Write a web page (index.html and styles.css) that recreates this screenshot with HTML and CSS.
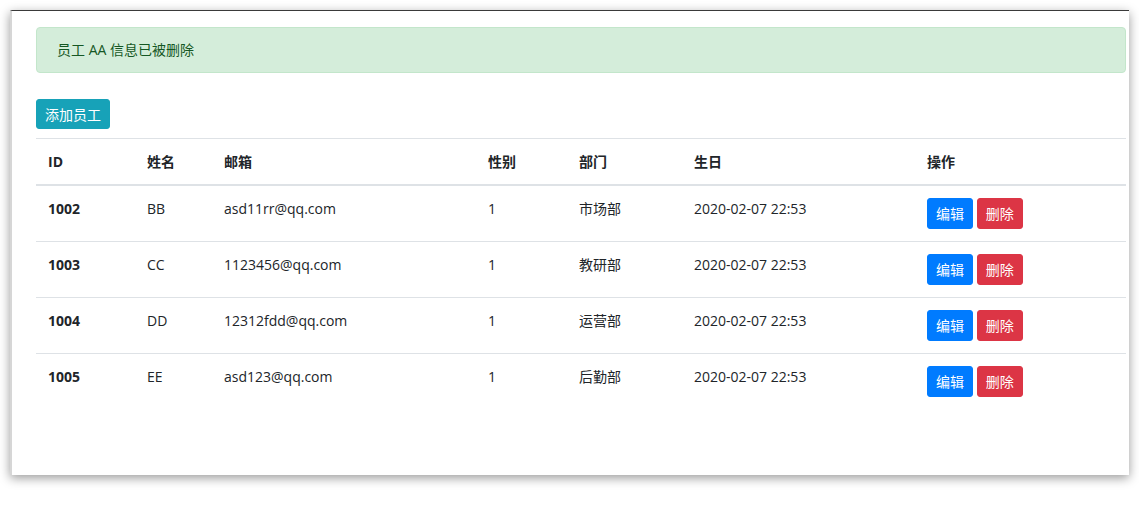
FILE: index.html
```html
<!DOCTYPE html>
<html lang="zh">
<head>
<meta charset="utf-8">
<title>员工列表</title>
<link rel="stylesheet" href="styles.css">
</head>
<body>
<div class="window">
  <div class="alert">员工 AA 信息已被删除</div>
  <button class="btn btn-info">添加员工</button>
  <table class="table">
    <colgroup>
      <col class="c-id"><col class="c-name"><col class="c-mail"><col class="c-sex"><col class="c-dept"><col class="c-birth"><col class="c-op">
    </colgroup>
    <thead>
      <tr><th>ID</th><th>姓名</th><th>邮箱</th><th>性别</th><th>部门</th><th>生日</th><th>操作</th></tr>
    </thead>
    <tbody>
      <tr><th>1002</th><td>BB</td><td>asd11rr@qq.com</td><td>1</td><td>市场部</td><td>2020-02-07 22:53</td><td><button class="btn btn-primary">编辑</button> <button class="btn btn-danger">删除</button></td></tr>
      <tr><th>1003</th><td>CC</td><td>1123456@qq.com</td><td>1</td><td>教研部</td><td>2020-02-07 22:53</td><td><button class="btn btn-primary">编辑</button> <button class="btn btn-danger">删除</button></td></tr>
      <tr><th>1004</th><td>DD</td><td>12312fdd@qq.com</td><td>1</td><td>运营部</td><td>2020-02-07 22:53</td><td><button class="btn btn-primary">编辑</button> <button class="btn btn-danger">删除</button></td></tr>
      <tr><th>1005</th><td>EE</td><td>asd123@qq.com</td><td>1</td><td>后勤部</td><td>2020-02-07 22:53</td><td><button class="btn btn-primary">编辑</button> <button class="btn btn-danger">删除</button></td></tr>
    </tbody>
  </table>
</div>
</body>
</html>
```
FILE: styles.css
```css
html, body {
  margin: 0;
  padding: 0;
  background: #fff;
}
body {
  font-family: "Open Sans", "Noto Sans CJK SC", sans-serif;
  font-size: 14px;
  line-height: 21px;
  color: #212529;
  min-height: 515px;
  padding-top: 10px;
  padding-left: 10px;
  box-sizing: border-box;
}
.window {
  box-sizing: border-box;
  width: 1119px;
  height: 465px;
  border-top: 1px solid #3a3a3a;
  border-left: 2px solid #d6d6d6;
  background: #fff;
  box-shadow: 0 3px 10px rgba(0, 0, 0, 0.4);
  padding: 16px 3px 0 24px;
}
.alert {
  box-sizing: border-box;
  height: 46px;
  padding: 11px 20px 12px;
  background: #d4edda;
  border: 1px solid #c3e6cb;
  color: #155724;
  border-radius: 4px;
  margin-bottom: 26px;
}
.btn {
  font-family: inherit;
  font-size: 14px;
  line-height: 21px;
  height: 31px;
  padding: 4px 8px;
  border: 1px solid transparent;
  border-radius: 3px;
  color: #fff;
  cursor: pointer;
  vertical-align: middle;
}
.btn-info { background: #17a2b8; border-color: #17a2b8; height: 30px; padding: 3px 8px; }
.btn-primary { background: #007bff; border-color: #007bff; }
.btn-danger { background: #dc3545; border-color: #dc3545; }
.table {
  margin-top: 9px;
  width: 1090px;
  border-collapse: collapse;
  table-layout: fixed;
}
.c-id { width: 99px; }
.c-name { width: 77px; }
.c-mail { width: 264px; }
.c-sex { width: 91px; }
.c-dept { width: 115px; }
.c-birth { width: 233px; }
.c-op { width: 211px; }
.table th, .table td {
  text-align: left;
  vertical-align: top;
  padding: 12px;
  border-top: 1px solid #dee2e6;
}
.table thead th {
  font-weight: bold;
  border-bottom: 2px solid #dee2e6;
}
.table tbody td, .table tbody th {
  height: 31px;
  box-sizing: content-box;
  padding-top: 12px;
  padding-bottom: 12px;
}
.table tbody th {
  font-weight: bold;
}
```
